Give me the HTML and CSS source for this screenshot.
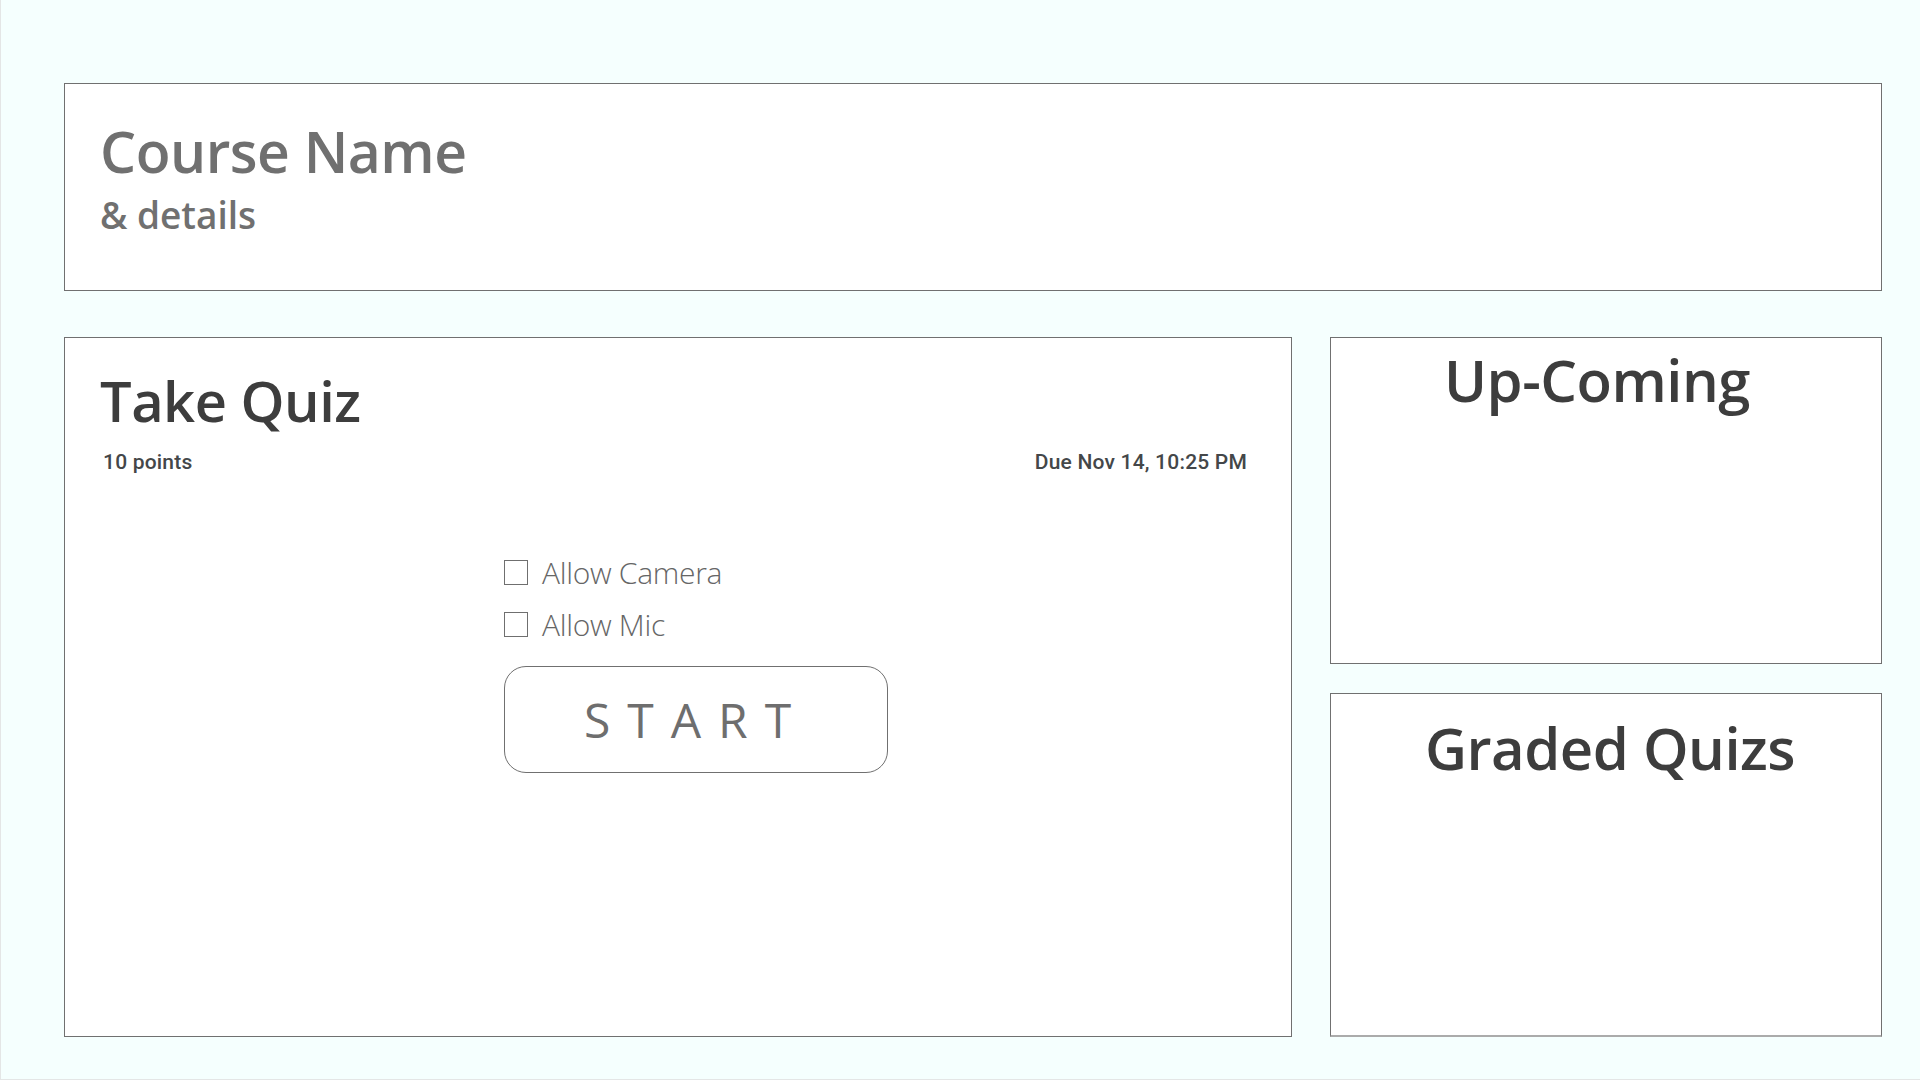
FILE: index.html
```html
<!DOCTYPE html>
<html lang="en">
<head>
<meta charset="utf-8">
<title>Course</title>
<link rel="stylesheet" href="styles.css">
</head>
<body>
<div class="page">
  <header class="course-card">
    <h1 class="course-name">Course Name</h1>
    <p class="course-details">&amp; details</p>
  </header>
  <main class="main-row">
    <section class="quiz-card">
      <h2 class="quiz-title">Take Quiz</h2>
      <div class="quiz-meta">
        <span class="meta-text">10 points</span>
        <span class="meta-text">Due Nov 14, 10:25 PM</span>
      </div>
      <div class="quiz-actions">
        <label class="check-row"><span class="check-box"></span><span class="check-label">Allow Camera</span></label>
        <label class="check-row"><span class="check-box"></span><span class="check-label">Allow Mic</span></label>
        <button class="start-btn" type="button">START</button>
      </div>
    </section>
    <aside class="side-col">
      <section class="side-card upcoming">
        <h2 class="side-title">Up-Coming</h2>
      </section>
      <section class="side-card graded">
        <h2 class="side-title">Graded Quizs</h2>
      </section>
    </aside>
  </main>
</div>
</body>
</html>
```
FILE: styles.css
```css
html, body {
  margin: 0;
  padding: 0;
}
body {
  background: #f5fffe;
  font-family: "Open Sans", "Noto Sans", sans-serif;
}
.page {
  box-sizing: border-box;
  width: 1920px;
  height: 1080px;
  border-left: 1px solid #e4e6e6;
  border-bottom: 1px solid #e4e6e6;
  padding: 83px 38px 0 63px;
}
.course-card {
  box-sizing: border-box;
  height: 208px;
  background: #fff;
  border: 1px solid #707070;
  padding: 28px 0 0 35px;
  color: #707070;
}
.course-name {
  margin: 0;
  font-size: 57px;
  font-weight: 600;
  line-height: 78px;
  letter-spacing: -0.5px;
}
.course-details {
  margin: 0;
  font-size: 37px;
  font-weight: 600;
  line-height: 50px;
}
.main-row {
  display: flex;
  gap: 38px;
  margin-top: 46px;
  height: 700px;
}
.quiz-card {
  box-sizing: border-box;
  width: 1228px;
  height: 700px;
  background: #fff;
  border: 1px solid #707070;
  padding: 22px 44px 0 35px;
}
.quiz-title {
  margin: 0;
  font-size: 56px;
  font-weight: 600;
  color: #3d3d3d;
  line-height: 80px;
  letter-spacing: -0.5px;
}
.quiz-meta {
  display: flex;
  justify-content: space-between;
  padding-left: 3px;
  margin-top: 8px;
}
.meta-text {
  font-family: "Roboto", sans-serif;
  font-weight: 500;
  font-size: 21px;
  color: #444749;
  line-height: 28px;
  letter-spacing: 0.2px;
}
.quiz-actions {
  display: flex;
  flex-direction: column;
  align-items: flex-start;
  padding-left: 404px;
  margin-top: 70px;
}
.check-row {
  display: flex;
  align-items: center;
  height: 52px;
}
.check-box {
  box-sizing: border-box;
  width: 24px;
  height: 25px;
  border: 1px solid #6f6f6f;
  background: #fff;
}
.check-label {
  margin-left: 14px;
  font-size: 30px;
  font-weight: 300;
  color: #666;
  letter-spacing: -0.3px;
}
.start-btn {
  box-sizing: border-box;
  width: 384px;
  height: 107px;
  margin-top: 16px;
  background: #fff;
  border: 1px solid #707070;
  border-radius: 22px;
  font-family: "Open Sans", sans-serif;
  font-size: 48px;
  font-weight: 400;
  color: #6e6e6e;
  letter-spacing: 17px;
  padding: 0;
}
.side-col {
  display: flex;
  flex-direction: column;
  gap: 29px;
  width: 552px;
}
.side-card {
  box-sizing: border-box;
  background: #fff;
  border: 1px solid #707070;
  text-align: center;
}
.upcoming {
  height: 327px;
  padding: 2px 18px 0 0;
}
.graded {
  height: 344px;
  border-bottom: 2px solid #ababab;
  padding: 14px 0 0 8px;
}
.side-title {
  margin: 0;
  font-size: 58px;
  font-weight: 600;
  color: #3d3d3d;
  line-height: 80px;
  letter-spacing: -0.5px;
}
```
